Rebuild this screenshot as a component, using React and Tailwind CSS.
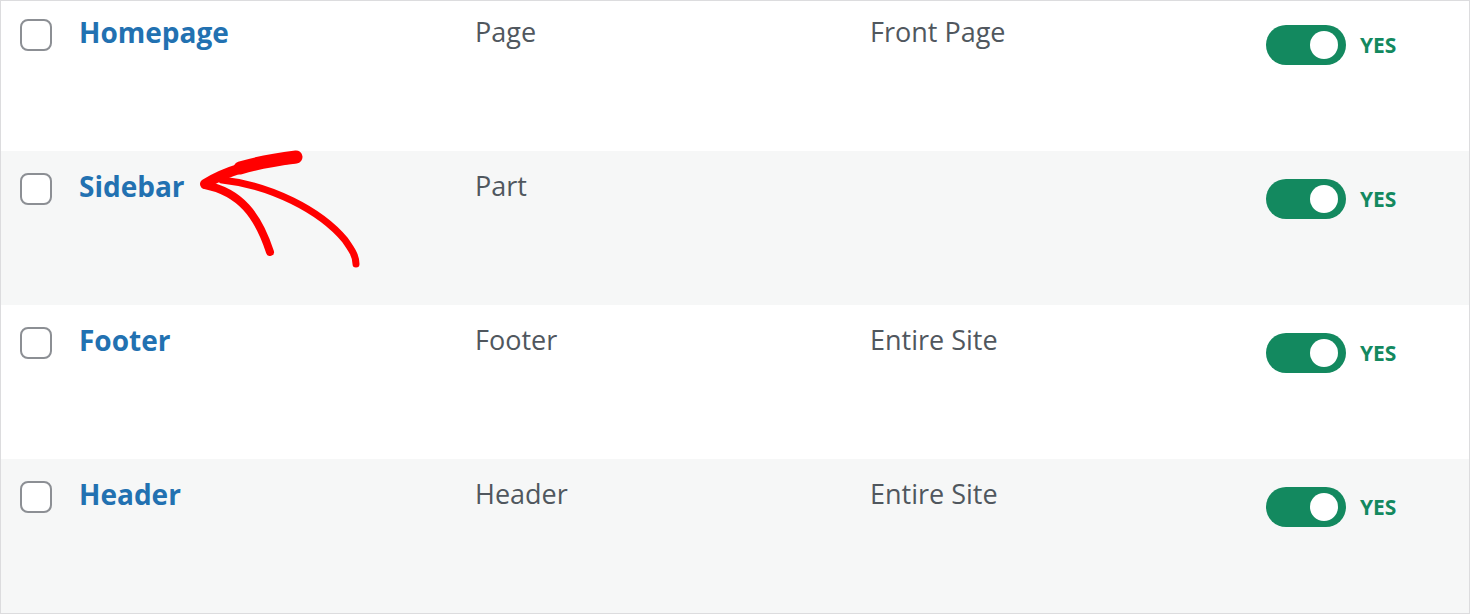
import React from 'react';

const rows = [
  { name: 'Homepage', type: 'Page', location: 'Front Page', first: true },
  { name: 'Sidebar', type: 'Part', location: '', alt: true },
  { name: 'Footer', type: 'Footer', location: 'Entire Site' },
  { name: 'Header', type: 'Header', location: 'Entire Site', alt: true },
];

function Toggle() {
  return (
    <div className="flex items-center gap-[14px] ml-[1px] mt-[12px]">
      <div className="relative w-[80px] h-[40px] rounded-full bg-[#13895f]">
        <span className="absolute top-[6px] right-[8px] w-[28px] h-[28px] rounded-full bg-white" />
      </div>
      <span className="text-[21px] font-bold text-[#13895f] leading-none">YES</span>
    </div>
  );
}

function Row({ row }) {
  return (
    <div
      className={
        'flex items-start pl-[19px] ' +
        (row.first ? 'h-[150px] pt-[12px] ' : 'h-[154px] pt-[16px] ') +
        (row.alt ? 'bg-[#f6f7f7]' : 'bg-white')
      }
    >
      <span className="mt-[6px] w-[32px] h-[32px] shrink-0 rounded-[8px] border-2 border-[#8c8f94] bg-white" />
      <a className="ml-[27px] mt-[1px] w-[396px] shrink-0 text-[28px] leading-[36px] font-bold text-[#2271b1]">
        {row.name}
      </a>
      <div className="w-[395px] mt-[1px] shrink-0 text-[27px] leading-[36px] text-[#50575e]">{row.type}</div>
      <div className="w-[395px] mt-[1px] shrink-0 text-[27px] leading-[36px] text-[#50575e]">{row.location}</div>
      <Toggle />
    </div>
  );
}

export default function App() {
  return (
    <div className="relative bg-white min-h-[616px]" style={{ fontFamily: '"Open Sans", "Noto Sans", sans-serif' }}>
      <div className="w-[1470px] border border-[#dcdcde]">
        {rows.map((row) => (
          <Row key={row.name} row={row} />
        ))}
      </div>

      {/* hand-drawn annotation arrow */}
      <svg className="absolute left-0 top-0 pointer-events-none" width="1472" height="616" viewBox="0 0 1472 616">
        <g fill="none" stroke="#ff0000" strokeLinecap="round" strokeLinejoin="round">
          <path d="M205 184 C 225 172, 250 163, 296 158" strokeWidth="10" />
          <path d="M240 168 C 260 162, 280 159, 296 157" strokeWidth="13" />
          <path d="M205 185 C 240 192, 258 215, 270 252" strokeWidth="8" />
          <path d="M222 180 C 270 185, 320 210, 345 240 C 352 250, 356 256, 356 264" strokeWidth="7" />
        </g>
      </svg>
    </div>
  );
}
